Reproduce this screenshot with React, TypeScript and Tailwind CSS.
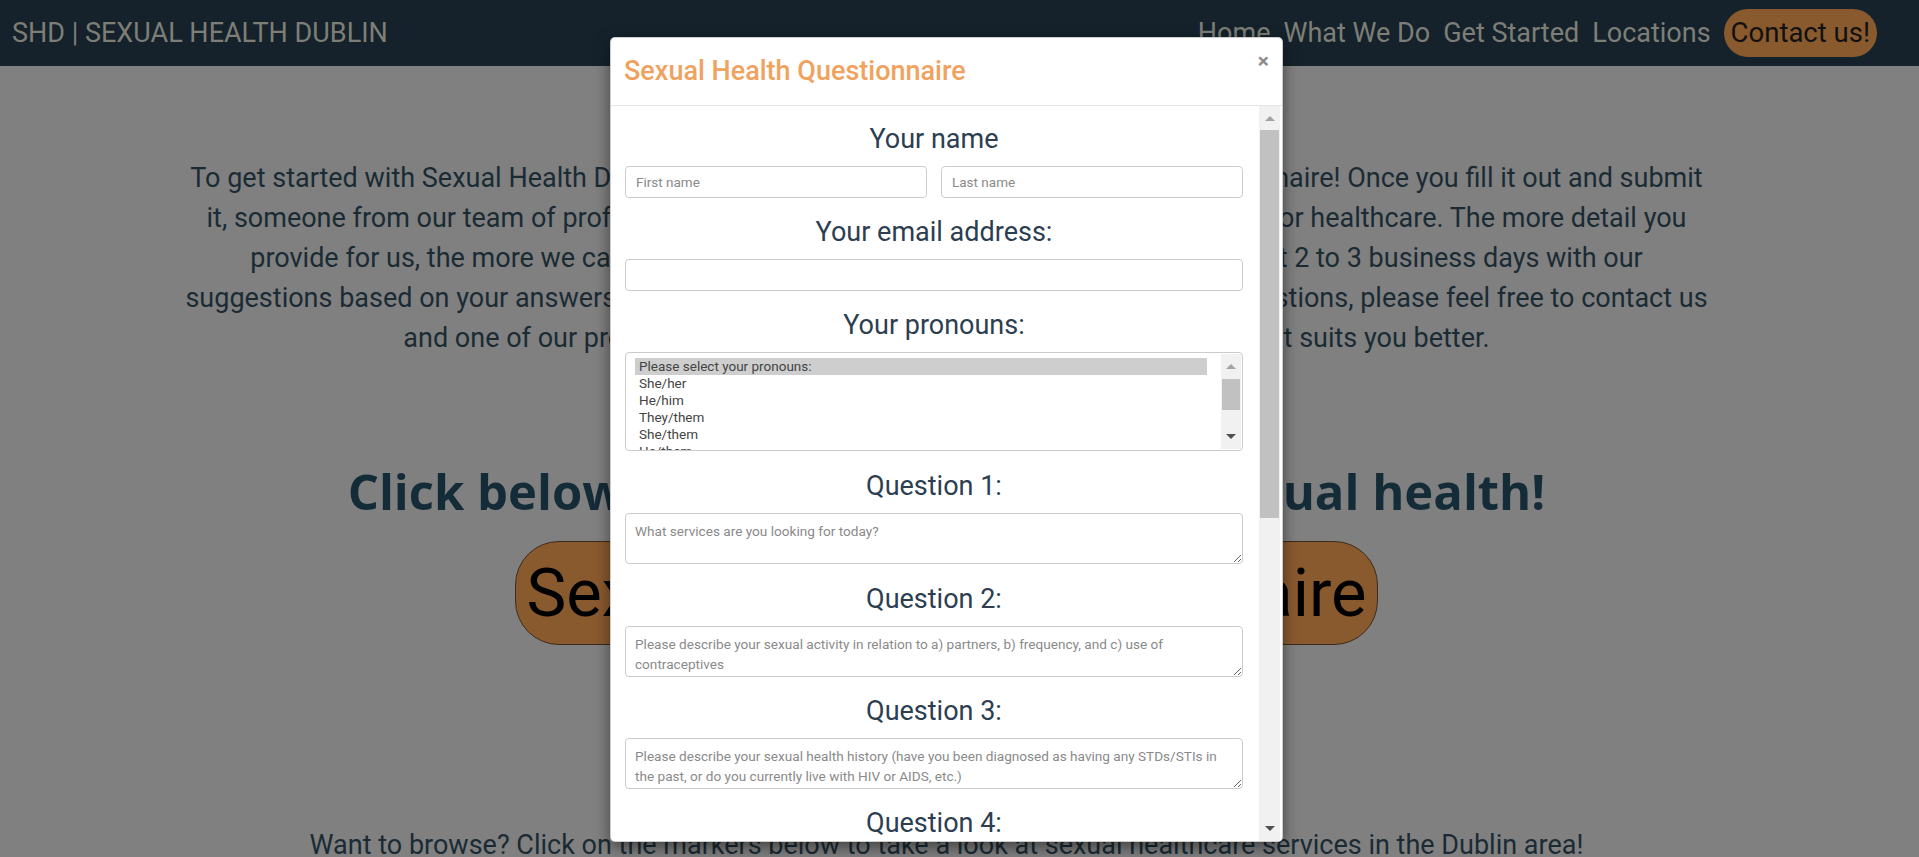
import React from 'react';

const NAV_LINKS = ['Home', 'What We Do', 'Get Started', 'Locations'];

const PRONOUNS = ['She/her', 'He/him', 'They/them', 'She/them', 'He/them'];

const INTRO_LINES = [
  'To get started with Sexual Health Dublin, please fill out our personal sexual health questionnaire! Once you fill it out and submit',
  'it, someone from our team of professionals will get back to you with customised options for healthcare. The more detail you',
  'provide for us, the more we can help you! You can expect to hear back from us in about 2 to 3 business days with our',
  'suggestions based on your answers. If you would prefer to speak in person or have any questions, please feel free to contact us',
  'and one of our professionals will help set up an appointment at a time that suits you better.',
];

const QUESTIONS = [
  { label: 'Question 1:', placeholder: 'What services are you looking for today?', gap: 'mt-[20px]' },
  {
    label: 'Question 2:',
    placeholder: 'Please describe your sexual activity in relation to a) partners, b) frequency, and c) use of contraceptives',
    gap: 'mt-[20px]',
  },
  {
    label: 'Question 3:',
    placeholder:
      'Please describe your sexual health history (have you been diagnosed as having any STDs/STIs in the past, or do you currently live with HIV or AIDS, etc.)',
    gap: 'mt-[19px]',
  },
];

// little scrollbar triangles
const Arrow: React.FC<{ dir: 'up' | 'down' }> = ({ dir }) =>
  dir === 'up' ? (
    <span className="h-0 w-0 border-x-[5px] border-b-[5px] border-x-transparent border-b-[#a3a3a3]" />
  ) : (
    <span className="h-0 w-0 border-x-[5px] border-t-[5px] border-x-transparent border-t-[#505050]" />
  );

const Heading: React.FC<{ children: React.ReactNode; className?: string }> = ({ children, className = '' }) => (
  <h3 className={`mb-[11px] text-center text-[27px] leading-[31px] text-[#2c3e50] ${className}`}>{children}</h3>
);

const inputClass =
  'block h-[32px] w-full rounded-[4px] border border-[#cccccc] bg-white px-[10px] text-[13.5px] text-[#555] outline-none placeholder:text-[#8a8a8a]';

const Questionnaire: React.FC = () => (
  <div className="absolute left-[610px] top-[37px] flex h-[805px] w-[673px] flex-col overflow-hidden rounded-[5px] border border-black/20 bg-white shadow-[0_5px_15px_rgba(0,0,0,0.5)]">
    <div className="relative flex h-[68px] shrink-0 items-center border-b border-[#e5e5e5] px-[13px]">
      <h2 className="text-[27px] font-medium text-[#f0a25f]">Sexual Health Questionnaire</h2>
      <button className="absolute right-[13px] top-[13px] text-[21px] font-bold leading-none text-[#8c8c8c]">×</button>
    </div>

    <div className="flex min-h-0 flex-1">
      <form className="min-w-0 flex-1 overflow-hidden pl-[14px] pr-[16px] pt-[18px]">
        <Heading>Your name</Heading>
        <div className="flex gap-[14px]">
          <input className={inputClass} placeholder="First name" />
          <input className={inputClass} placeholder="Last name" />
        </div>

        <Heading className="mt-[19px]">Your email address:</Heading>
        <input className={inputClass} type="email" />

        <Heading className="mt-[19px]">Your pronouns:</Heading>
        <div className="flex h-[99px] overflow-hidden rounded-[4px] border border-[#cccccc]">
          <div className="flex-1 overflow-hidden pl-[9px] pr-[14px] pt-[5px] text-[13.5px] leading-[17px] text-[#444]">
            <div className="bg-[#cecece] pl-[4px]">Please select your pronouns:</div>
            {PRONOUNS.map((p) => (
              <div key={p} className="pl-[4px]">
                {p}
              </div>
            ))}
          </div>
          <div className="my-[1px] mr-[1px] flex w-[20px] flex-col bg-[#f1f1f1]">
            <div className="flex h-[25px] items-center justify-center">
              <Arrow dir="up" />
            </div>
            <div className="mx-[1px] h-[31px] bg-[#c1c1c1]" />
            <div className="flex-1" />
            <div className="flex h-[25px] items-center justify-center">
              <Arrow dir="down" />
            </div>
          </div>
        </div>

        {QUESTIONS.map((q) => (
          <div key={q.label} className={q.gap}>
            <Heading>{q.label}</Heading>
            <textarea
              placeholder={q.placeholder}
              className="block h-[51px] w-full rounded-[4px] border border-[#cccccc] px-[9px] py-[7px] text-[13.6px] leading-[20px] text-[#555] outline-none placeholder:text-[#8a8a8a]"
            />
          </div>
        ))}

        <Heading className="mt-[19px]">Question 4:</Heading>
      </form>

      <div className="mr-[2px] flex w-[21px] flex-col bg-[#f1f1f1]">
        <div className="flex h-[24px] items-center justify-center">
          <Arrow dir="up" />
        </div>
        <div className="mx-[1px] h-[388px] bg-[#c1c1c1]" />
        <div className="flex-1" />
        <div className="flex h-[26px] items-center justify-center">
          <Arrow dir="down" />
        </div>
      </div>
    </div>
  </div>
);

const App: React.FC = () => {
  return (
    <div className="relative h-[857px] w-full overflow-hidden bg-[#808080] font-['Roboto',sans-serif]">
      <nav className="flex h-[66px] items-center justify-between bg-[#15222b] pl-[12px] pr-[42px] text-[27px] text-[#7d7f77]">
        <span>SHD | SEXUAL HEALTH DUBLIN</span>
        <div className="flex items-center gap-[13px]">
          {NAV_LINKS.map((link) => (
            <a key={link} href="#">
              {link}
            </a>
          ))}
          <a href="#" className="rounded-full bg-[#8a5a2f] px-[7px] text-[27.5px] leading-[48px] text-[#111]">
            Contact us!
          </a>
        </div>
      </nav>

      <main className="pr-[26px] text-center">
        <p className="mt-[92px] text-[27px] leading-[40px] text-[#1b2b34]">
          {INTRO_LINES.map((line) => (
            <span key={line} className="block">
              {line}
            </span>
          ))}
        </p>

        <h1 className="mt-[104px] font-['Open_Sans',sans-serif] text-[49px] font-bold leading-[58px] text-[#142b38]">
          Click below to take control of your sexual health!
        </h1>

        <button className="mt-[21px] h-[104px] rounded-[44px] border border-[#3b2b1c] bg-[#8a5a2f] px-[10px] text-[67px] text-black">
          Sexual Health Questionnaire
        </button>

        <p className="mt-[180px] text-[27px] leading-[40px] text-[#1b2b34]">
          Want to browse? Click on the markers below to take a look at sexual healthcare services in the Dublin area!
        </p>
      </main>

      <Questionnaire />
    </div>
  );
};

export default App;
